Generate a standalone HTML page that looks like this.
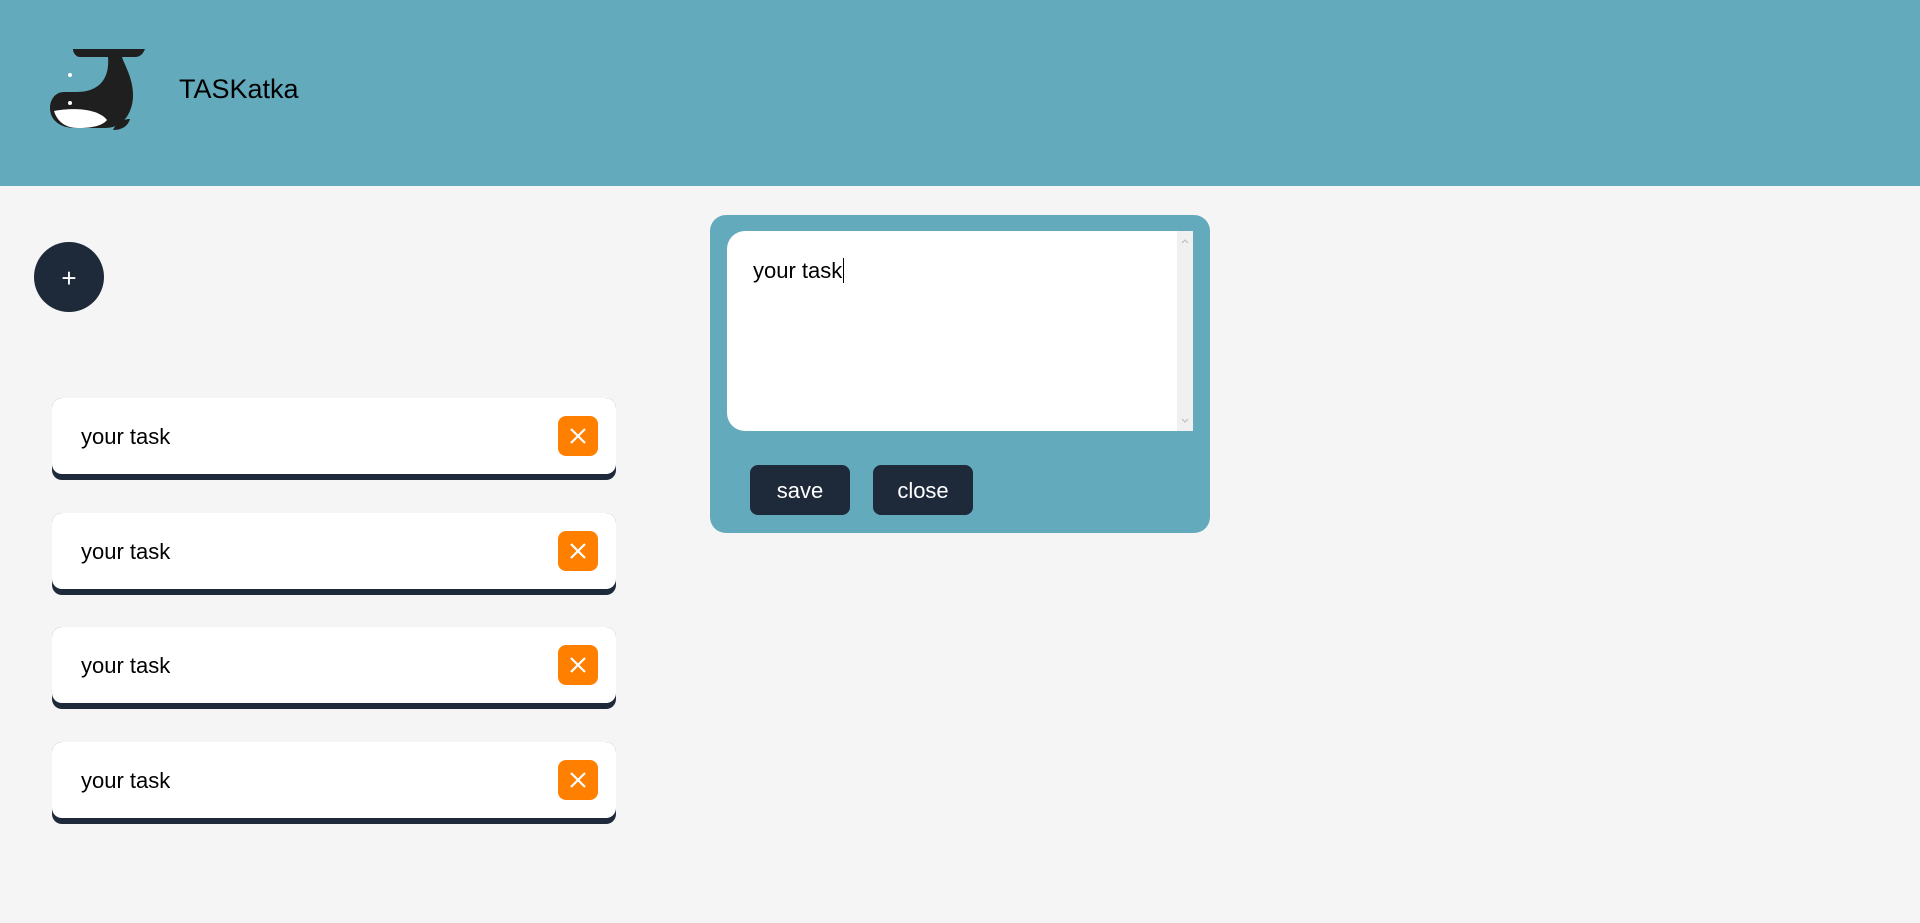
<!DOCTYPE html>
<html><head><meta charset="utf-8"><style>
*{margin:0;padding:0;box-sizing:border-box}
body{width:1920px;height:923px;background:#f5f5f5;font-family:"Liberation Sans",sans-serif;position:relative;overflow:hidden}
.hdr{position:absolute;left:0;top:0;width:1920px;height:186px;background:#64aabd}
.title{position:absolute;left:179px;top:73px;font-size:27px;color:#000;line-height:32px}
.plus{position:absolute;left:34px;top:242px;width:70px;height:70px;border-radius:50%;background:#1e2a3a;color:#fff;font-size:26px;text-align:center;line-height:72px}
.card{position:absolute;left:52px;width:564px;height:82px;background:#1e2a3a;border-radius:10px}
.card .in{position:absolute;left:0;top:0;width:564px;height:76px;background:#fff;border-radius:10px}
.card .t{position:absolute;left:29px;top:26px;font-size:22px;line-height:26px;color:#000}
.card .x{position:absolute;left:506px;top:18px;width:40px;height:40px;border-radius:8px;background:#ff7f00}
.modal{position:absolute;left:710px;top:215px;width:500px;height:318px;background:#64aabd;border-radius:16px}
.ta{position:absolute;left:17px;top:16px;width:466px;height:200px;background:#fff;border-radius:18px 0 0 18px}
.ta .t{position:absolute;left:26px;top:27px;font-size:22px;line-height:26px;color:#000}
.sb{position:absolute;right:0;top:0;width:16px;height:200px;background:#f0f0f0}
.btn{position:absolute;top:250px;width:100px;height:50px;background:#1e2a3a;border-radius:8px;color:#fff;font-size:22px;text-align:center;line-height:52px}
</style></head><body>
<div class="hdr">
<svg width="200" height="186" style="position:absolute;left:0;top:0">
<path d="M73,49 L145,49 C143,54 140,57 135,57 L80,57 C76,57 73,53 73,49Z" fill="#1f1f1f"/>
<path d="M108,57 C110,82 96,92 76,92 L64,92 C55,92 50,100 50,108 C50,120 60,128 75,128 L105,128 C122,128 133,114 133,95 C133,78 124,64 122,57 Z" fill="#1f1f1f"/>
<path d="M54,111 C68,108 97,107 107,120 C102,126 92,128 78,128 C65,128 57,121 54,111Z" fill="#fff"/>
<path d="M113,130 C116,123 122,119 130,119 C128,126 122,130 113,130Z" fill="#1f1f1f"/>
<circle cx="70" cy="75" r="2" fill="#fff"/>
<circle cx="70" cy="103" r="2" fill="#fff"/>
</svg>
<div class="title">TASKatka</div>
</div>
<div class="plus">+</div>

<div class="card" style="top:398px"><div class="in"><div class="t">your task</div><svg class="x" viewBox="0 0 40 40"><path d="M13,13 L27,27 M27,13 L13,27" stroke="#fff" stroke-width="2.2"/></svg></div></div>
<div class="card" style="top:513px"><div class="in"><div class="t">your task</div><svg class="x" viewBox="0 0 40 40"><path d="M13,13 L27,27 M27,13 L13,27" stroke="#fff" stroke-width="2.2"/></svg></div></div>
<div class="card" style="top:627px"><div class="in"><div class="t">your task</div><svg class="x" viewBox="0 0 40 40"><path d="M13,13 L27,27 M27,13 L13,27" stroke="#fff" stroke-width="2.2"/></svg></div></div>
<div class="card" style="top:742px"><div class="in"><div class="t">your task</div><svg class="x" viewBox="0 0 40 40"><path d="M13,13 L27,27 M27,13 L13,27" stroke="#fff" stroke-width="2.2"/></svg></div></div>

<div class="modal">
<div class="ta"><div class="t">your task<span style="border-left:1px solid #000;margin-left:1px"></span></div>
<div class="sb"><svg width="16" height="200"><path d="M5,12 L8,9 L11,12" stroke="#bbb" fill="none"/><path d="M5,188 L8,191 L11,188" stroke="#bbb" fill="none"/></svg></div></div>
<div class="btn" style="left:40px">save</div>
<div class="btn" style="left:163px">close</div>
</div>
</body></html>
